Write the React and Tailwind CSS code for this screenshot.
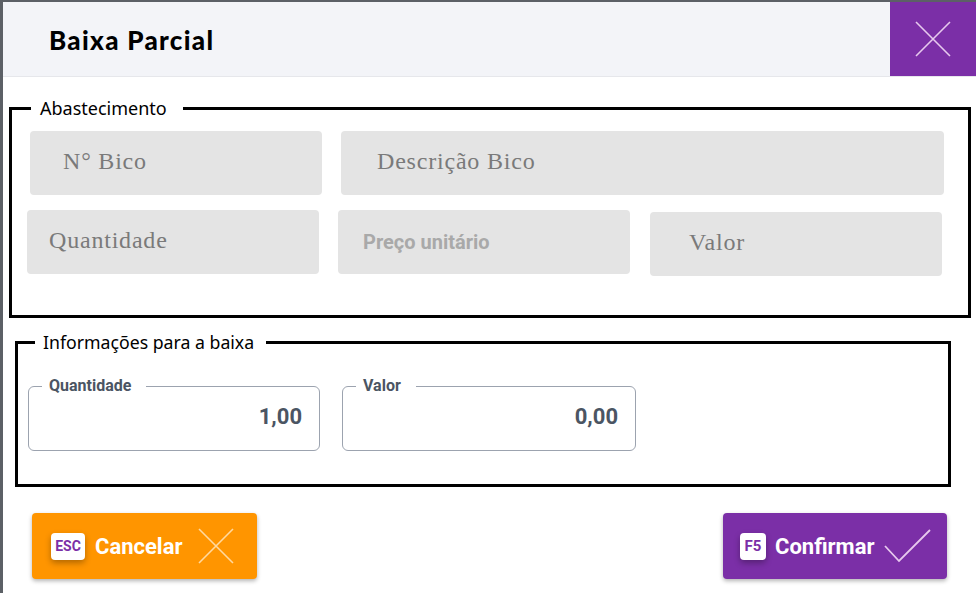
import React from "react";

const PURPLE = "bg-[#7b2fa7]";

const GreyBox = ({ className, children }) => (
  <div className={`h-[64px] rounded-[4px] bg-[#e4e4e4] flex items-center ${className}`}>
    {children}
  </div>
);

const SerifText = ({ children }) => (
  <span className="text-[24px] tracking-[0.8px] text-[#7a7a7a] -mt-[4px]" style={{ fontFamily: "'Liberation Serif', serif" }}>
    {children}
  </span>
);

const OutlinedField = ({ label, value, className }) => (
  <fieldset className={`h-[74px] rounded-[6px] border border-[#9ca3af] ${className}`}>
    <legend className="ml-[13px] pl-[7px] pr-[15px] text-[16px] leading-[18px] font-bold text-[#4b5563]">{label}</legend>
    <div className="text-right text-[22px] leading-[26px] font-bold text-[#4b5563] pt-[9px] pr-[17px]">{value}</div>
  </fieldset>
);

const App = () => {
  return (
    <div className="w-[976px] h-[593px] bg-[#5c6066] pl-[3px] pt-[2px] overflow-hidden" style={{ fontFamily: "Roboto, sans-serif" }}>
      <div className="w-full h-full bg-white flex flex-col">
        {/* Header */}
        <div className="h-[75px] shrink-0 flex bg-[#f3f4f8] border-b border-[#e6e7eb]">
          <div className="flex-1 flex items-center pl-[46px]">
            <h1 className="text-[26px] tracking-[1.3px] font-black text-black mt-[2px]" style={{ fontFamily: "Lato, sans-serif" }}>Baixa Parcial</h1>
          </div>
          <button className={`w-[86px] h-[74px] ${PURPLE} flex items-center justify-center`}>
            <svg width="36" height="36" viewBox="0 0 36 36" fill="none" stroke="#e7c9ee" strokeWidth="1.6">
              <path d="M1 1 L35 35 M35 1 L1 35" />
            </svg>
          </button>
        </div>

        {/* Abastecimento */}
        <fieldset className="mt-[19px] ml-[6px] w-[962px] border-[3px] border-black pl-[15px] pr-[20px] pt-[11px] pb-[39px]" style={{ fontFamily: "'Noto Sans', sans-serif" }}>
          <legend className="ml-[4px] pl-[9px] pr-[16px] text-[18px] leading-[24px] text-black">Abastecimento</legend>
          <div className="flex gap-[19px] ml-[3px]">
            <GreyBox className="w-[292px] pl-[33px]">
              <SerifText>N° Bico</SerifText>
            </GreyBox>
            <GreyBox className="w-[603px] pl-[36px]">
              <SerifText>Descrição Bico</SerifText>
            </GreyBox>
          </div>
          <div className="flex gap-[19px] mt-[15px] items-start">
            <GreyBox className="w-[292px] pl-[22px]">
              <SerifText>Quantidade</SerifText>
            </GreyBox>
            <GreyBox className="w-[292px] pl-[25px]">
              <span className="text-[20px] font-bold text-[#a9a9a9]" style={{ fontFamily: "Roboto, sans-serif" }}>Preço unitário</span>
            </GreyBox>
            <GreyBox className="w-[292px] pl-[39px] mt-[2px] ml-[1px]">
              <SerifText>Valor</SerifText>
            </GreyBox>
          </div>
        </fieldset>

        {/* Informações para a baixa */}
        <fieldset className="mt-[12px] ml-[12px] w-[936px] border-[3px] border-black pl-[10px] pr-[20px] pt-[23px] pb-[33px]">
          <legend className="ml-[7px] pl-[8px] pr-[12px] text-[17.7px] leading-[24px] text-black" style={{ fontFamily: "'Noto Sans', sans-serif" }}>Informações para a baixa</legend>
          <div className="flex gap-[22px]">
            <OutlinedField label="Quantidade" value="1,00" className="w-[292px]" />
            <OutlinedField label="Valor" value="0,00" className="w-[294px]" />
          </div>
        </fieldset>

        {/* Buttons */}
        <div className="flex justify-between mt-[26px] pl-[29px] pr-[29px]">
          <button className="w-[225px] h-[66px] rounded-[4px] bg-[#ff9500] shadow-[0_2px_4px_rgba(0,0,0,0.3)] flex items-center pl-[19px]">
            <span className="w-[34px] h-[27px] rounded-[4px] bg-white flex items-center justify-center text-[14px] font-bold text-[#7b2fa7] shadow-[0_3px_6px_rgba(0,0,0,0.3)]">ESC</span>
            <span className="ml-[10px] text-[22px] font-bold text-white">Cancelar</span>
            <svg className="ml-[15px]" width="36" height="36" viewBox="0 0 36 36" fill="none" stroke="#ffd9a0" strokeWidth="1.6">
              <path d="M1 1 L35 35 M35 1 L1 35" />
            </svg>
          </button>
          <button className={`w-[224px] h-[66px] rounded-[4px] ${PURPLE} shadow-[0_2px_4px_rgba(0,0,0,0.3)] flex items-center pl-[17px]`}>
            <span className="w-[26px] h-[27px] rounded-[4px] bg-white flex items-center justify-center text-[15px] font-bold text-[#7b2fa7] shadow-[0_3px_6px_rgba(0,0,0,0.3)]">F5</span>
            <span className="ml-[9px] text-[22px] font-bold text-white">Confirmar</span>
            <svg className="ml-[9px]" width="48" height="34" viewBox="0 0 48 34" fill="none" stroke="#e7c9ee" strokeWidth="1.8">
              <path d="M1 17 L15 32 L46 1" />
            </svg>
          </button>
        </div>
      </div>
    </div>
  );
};

export default App;
